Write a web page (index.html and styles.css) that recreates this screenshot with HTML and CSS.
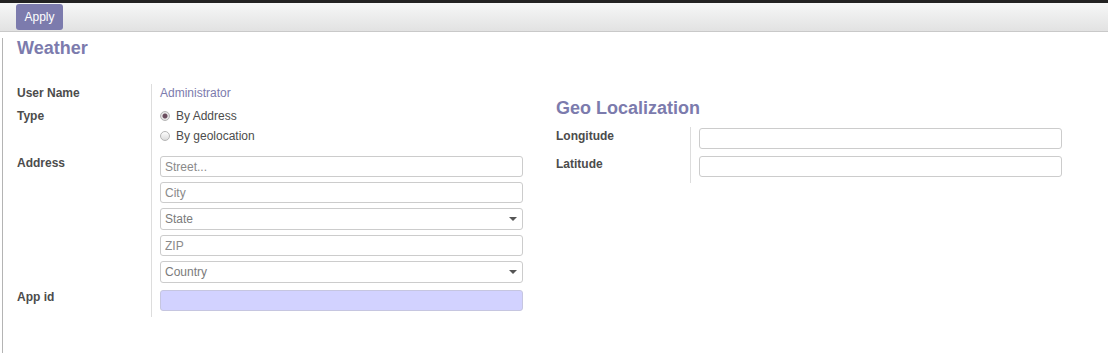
FILE: index.html
```html
<!DOCTYPE html>
<html>
<head>
  <title>Weather Settings</title>
  <link rel="stylesheet" href="styles.css">
</head>
<body>
  <div class="topbar"></div>
  <div class="toolbar">
    <button class="btn-apply" type="button">Apply</button>
  </div>
  <div class="sheet">
    <h1 class="sheet-title">Weather</h1>
    <div class="groups">
      <div class="group">
        <div class="field-row row-user">
          <div class="field-label">User Name</div>
          <div class="field-value"><a href="#" class="user-link">Administrator</a></div>
        </div>
        <div class="field-row row-type">
          <div class="field-label">Type</div>
          <div class="field-value">
            <label class="radio"><input type="radio" name="type" checked> By Address</label>
            <label class="radio"><input type="radio" name="type"> By geolocation</label>
          </div>
        </div>
        <div class="field-row row-address">
          <div class="field-label">Address</div>
          <div class="field-value address-list">
            <input type="text" class="field-input" placeholder="Street...">
            <input type="text" class="field-input" placeholder="City">
            <div class="select-wrap">
              <select class="field-input field-select"><option>State</option></select>
            </div>
            <input type="text" class="field-input" placeholder="ZIP">
            <div class="select-wrap">
              <select class="field-input field-select"><option>Country</option></select>
            </div>
          </div>
        </div>
        <div class="field-row row-appid">
          <div class="field-label">App id</div>
          <div class="field-value">
            <input type="text" class="field-input field-required">
          </div>
        </div>
      </div>

      <div class="group group-geo">
        <h2 class="group-title">Geo Localization</h2>
        <div class="field-row row-geo">
          <div class="field-label">Longitude</div>
          <div class="field-value"><input type="text" class="field-input"></div>
        </div>
        <div class="field-row row-geo row-geo-last">
          <div class="field-label">Latitude</div>
          <div class="field-value"><input type="text" class="field-input"></div>
        </div>
      </div>
    </div>
  </div>
  <div class="bottom-band"></div>
</body>
</html>
```

FILE: styles.css
```css
body {
  margin: 0;
  font-family: "Liberation Sans", Arial, sans-serif;
  font-size: 12px;
  color: #4c4c4c;
  background: #fff;
}

.topbar {
  height: 3px;
  background-color: #222;
}

.toolbar {
  height: 28px;
  padding-left: 16px;
  background: linear-gradient(to bottom, #f6f7f7, #e2e2e2);
  border-bottom: 1px solid #c9c9c9;
}

.btn-apply {
  margin-top: 1px;
  height: 26px;
  width: 47px;
  padding: 0;
  border: none;
  border-radius: 3px;
  background-color: #7c7bad;
  color: #fff;
  font-family: inherit;
  font-size: 12px;
  cursor: pointer;
}

.sheet {
  height: 316px;
  margin-left: 2px;
  padding-left: 14px;
  border-left: 1px solid #b4b4b4;
  box-sizing: border-box;
}

.sheet-title {
  margin: 6px 0 0 0;
  font-size: 18px;
  line-height: 20px;
  font-weight: bold;
  color: #7c7bad;
}

.groups {
  display: grid;
  grid-template-columns: 506px 506px;
  column-gap: 33px;
  margin-top: 26px;
}

.group-title {
  margin: 14px 0 9px 0;
  font-size: 18px;
  line-height: 20px;
  font-weight: bold;
  color: #7c7bad;
}

.field-row {
  display: grid;
  grid-template-columns: 134px 1fr;
}

.field-label {
  font-weight: bold;
  color: #4c4c4c;
  line-height: 18px;
}

.field-value {
  border-left: 1px solid #ddd;
  padding-left: 8px;
}

.row-user .field-label,
.row-user .field-value {
  line-height: 18px;
  padding-bottom: 4px;
}

.user-link {
  color: #7c7bad;
  text-decoration: none;
}

.row-type .field-label {
  line-height: 20px;
}

.row-type .field-value {
  padding-bottom: 6px;
}

.radio {
  display: flex;
  align-items: center;
  height: 20px;
  color: #4c4c4c;
}

.radio input {
  appearance: none;
  -webkit-appearance: none;
  width: 10px;
  height: 10px;
  margin: 0 6px 0 0;
  border: 1px solid #b5b5b5;
  border-radius: 50%;
  background: linear-gradient(to bottom, #fdfdfd, #dcdcdc);
}

.radio input:checked {
  background: radial-gradient(circle, #6a4d5e 0, #6a4d5e 2px, #e8e8e8 3px, #d6d6d6 100%);
}

.row-address .field-label {
  padding-top: 2px;
  line-height: 18px;
}

.address-list {
  display: flex;
  flex-direction: column;
  gap: 5px;
  padding-top: 4px;
  padding-bottom: 5px;
}

.field-input {
  display: block;
  width: 363px;
  height: 21px;
  margin: 0;
  padding: 0 4px;
  box-sizing: border-box;
  border: 1px solid #ccc;
  border-radius: 3px;
  background: #fff;
  font-family: inherit;
  font-size: 12px;
  color: #4c4c4c;
}

.field-input::placeholder {
  color: #8a8a8a;
}

.select-wrap {
  position: relative;
  width: 363px;
}

.field-select {
  appearance: none;
  -webkit-appearance: none;
  height: 22px;
  color: #7b7b7b;
}

.select-wrap::after {
  content: "";
  position: absolute;
  right: 6px;
  top: 9px;
  border-left: 4px solid transparent;
  border-right: 4px solid transparent;
  border-top: 4px solid #555;
}

.row-appid .field-label {
  line-height: 18px;
}

.row-appid .field-value {
  padding-top: 2px;
  padding-bottom: 6px;
}

.field-required {
  background-color: #d2d2ff;
  border-color: #c6c6e0;
}

.row-geo .field-label {
  padding-top: 0;
  line-height: 18px;
}

.row-geo .field-value {
  padding-top: 1px;
  padding-bottom: 6px;
}

.row-geo .field-input {
  height: 21px;
}

.bottom-band {
  height: 5px;
  background-color: #f0f0f0;
}
```
